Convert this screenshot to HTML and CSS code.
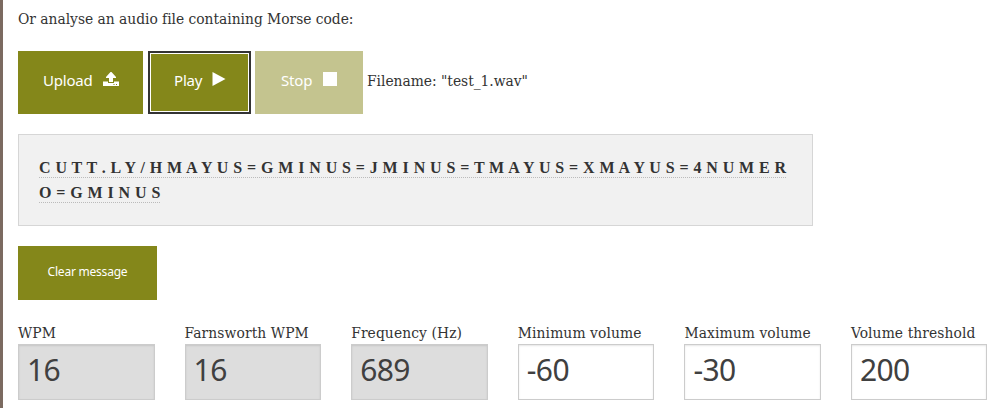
FILE: index.html
```html
<!DOCTYPE html>
<html lang="en">
<head>
<meta charset="utf-8">
<title>Morse code audio decoder</title>
<link rel="stylesheet" href="styles.css">
</head>
<body>
<main class="page">
  <p class="intro">Or analyse an audio file containing Morse code:</p>
  <div class="controls">
    <button class="btn upload"><span>Upload</span><svg class="icon" width="16" height="14" viewBox="0 0 16 14"><path fill="currentColor" d="M7.5 0H8.5L13 5V6H10V10H6V6H3V5ZM0 9.5H5V11H11V9.5H16V14H0ZM10.5 12V13H11.5V12ZM13 12V13H14V12Z" fill-rule="evenodd"/></svg></button>
    <button class="btn play"><span>Play</span><svg class="icon" width="14" height="14" viewBox="0 0 14 14"><path fill="currentColor" d="M.5 0 13.5 7 .5 14Z"/></svg></button>
    <button class="btn stop" disabled><span>Stop</span><svg class="icon" width="14" height="14" viewBox="0 0 14 14"><path fill="currentColor" d="M0 0H14V14H0Z"/></svg></button>
    <span class="filename">Filename: "test_1.wav"</span>
  </div>
  <div class="message"><span class="line">C U T T . L Y / H M A Y U S = G M I N U S = J M I N U S = T M A Y U S = X M A Y U S = 4 N U M E R</span><br><span class="line">O = G M I N U S</span></div>
  <button class="btn clear">Clear message</button>
  <div class="fields">
    <label class="field"><span class="name">WPM</span><input value="16" disabled></label>
    <label class="field"><span class="name">Farnsworth WPM</span><input value="16" disabled></label>
    <label class="field"><span class="name">Frequency (Hz)</span><input value="689" disabled></label>
    <label class="field"><span class="name">Minimum volume</span><input value="-60"></label>
    <label class="field"><span class="name">Maximum volume</span><input value="-30"></label>
    <label class="field"><span class="name">Volume threshold</span><input value="200"></label>
  </div>
</main>
</body>
</html>
```
FILE: styles.css
```css
* { box-sizing: border-box; }
body {
  margin: 0;
  height: 408px;
  overflow: hidden;
  background: #fff;
  color: #333;
  font: 15.4px/25px "DejaVu Serif Condensed", "DejaVu Serif", serif;
  font-stretch: condensed;
  letter-spacing: -.02px;
}
.page {
  height: 408px;
  border-left: 3px solid #7b6a60;
  padding: 7px 0 0 15px;
}
.intro { margin: 0; white-space: nowrap; }
.controls { display: flex; margin-top: 19px; height: 63px; }
.btn {
  display: flex;
  align-items: center;
  border: 0;
  padding: 0 0 4px;
  background: #84871a;
  color: #fff;
  font: 15px/20px "Noto Sans", sans-serif;
  letter-spacing: -.2px;
}
.btn span { margin-top: -2px; }
.icon { display: block; margin-bottom: 4px; }
.upload { width: 125px; padding-left: 25px; gap: 10px; }
.play {
  width: 97px;
  height: 57px;
  margin: 3px 7px 3px 8px;
  padding-left: 23px;
  gap: 10px;
  box-shadow: 0 0 0 1px #fff, 0 0 0 3px #333;
}
.stop { width: 108px; padding-left: 26px; gap: 11px; background: #c4c48f; }
.filename { margin: 18px 0 0 4px; white-space: nowrap; }
.message {
  width: 795px;
  height: 92px;
  margin-top: 20px;
  padding: 20px;
  border: 1px solid #d6d6d6;
  background: #f1f1f1;
  font: bold 16px/25px "Liberation Serif", serif;
  letter-spacing: 0;
  white-space: nowrap;
}
.line { padding-bottom: 1px; border-bottom: 1px dotted #bbb; word-spacing: .85px; }
.clear { width: 139px; height: 54px; padding-bottom: 2px; margin-top: 20px; justify-content: center; font-size: 12px; letter-spacing: -.22px; }
.fields { display: grid; grid-template-columns: repeat(6, 137px); column-gap: 29.6px; margin-top: 21px; }
.field { display: block; min-width: 0; }
.name { display: block; height: 23px; letter-spacing: .1px; white-space: nowrap; }
.field input {
  display: block;
  width: 136.5px;
  height: 56px;
  border: 1px solid #ccc;
  padding: 0 8px 6px;
  background: #fff;
  box-shadow: inset 0 1px 2px rgba(0,0,0,.1);
  color: #404040;
  font: 30px/40px "Noto Sans", sans-serif;
  letter-spacing: -.6px;
}
.field input:disabled { background: #ddd; }
```
